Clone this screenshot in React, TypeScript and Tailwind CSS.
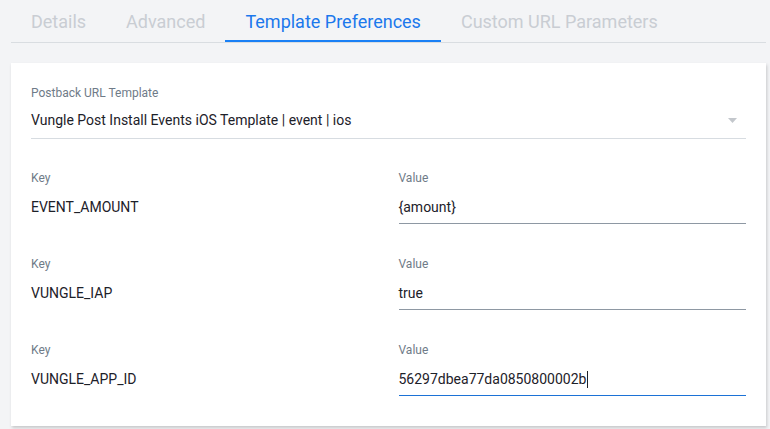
import React from 'react';

const tabs = ['Details', 'Advanced', 'Template Preferences', 'Custom URL Parameters'];

const rows = [
  { k: 'EVENT_AMOUNT', v: '{amount}' },
  { k: 'VUNGLE_IAP', v: 'true' },
  { k: 'VUNGLE_APP_ID', v: '56297dbea77da0850800002b', focused: true },
];

const Field: React.FC<{ label: string; value: string; line?: 'none' | 'gray' | 'blue'; caret?: boolean }> = ({
  label,
  value,
  line = 'none',
  caret = false,
}) => (
  <div>
    <div className="text-[12px] leading-4 text-[#6f7b88]">{label}</div>
    <div
      className={
        'mt-[3px] h-[35px] flex items-center pt-[2px] text-[14px] text-[#1d2129] ' +
        (line === 'gray' ? 'border-b border-[#8e98a3]' : line === 'blue' ? 'border-b border-[#1c72d6]' : '')
      }
    >
      {value}
      {caret && <span className="ml-px inline-block w-px h-[17px] bg-[#1d2129]" />}
    </div>
  </div>
);

export default function App() {
  return (
    <div className="min-h-screen w-[770px] h-[429px] overflow-hidden bg-[#f3f4f6] pl-[11px] pr-[4px] font-['Roboto',sans-serif]">
      <div className="flex border-b border-[#d9dde1]">
        {tabs.map((t, i) => (
          <div
            key={t}
            className={
              'h-[42px] px-5 pt-[2px] flex items-center text-[18px] border-b-2 ' +
              (i === 2 ? 'text-[#1b78ec] border-[#1a80f5]' : 'text-[#c9cdd3] border-transparent')
            }
          >
            {t}
          </div>
        ))}
      </div>

      <div className="mt-5 bg-white shadow-[1px_2px_3px_rgba(0,0,0,0.18)] px-5 pt-[22px] pb-[30px]">
        <div>
          <div className="text-[12px] leading-4 text-[#6f7b88]">Postback URL Template</div>
          <div className="mt-[3px] h-[35px] flex items-center justify-between pb-[2px] border-b border-[#d7dce1] text-[14px] text-[#1d2129]">
            <span>Vungle Post Install Events iOS Template | event | ios</span>
            <svg width="9" height="5" viewBox="0 0 9 5" className="mr-[9px]">
              <polygon points="0,0 9,0 4.5,5" fill="#c3c7cc" />
            </svg>
          </div>
        </div>

        {rows.map((r, i) => (
          <div key={r.k} className={'grid grid-cols-2 gap-x-5 ' + (i === 0 ? 'mt-[31px]' : 'mt-[32px]')}>
            <Field label="Key" value={r.k} />
            <Field label="Value" value={r.v} line={r.focused ? 'blue' : 'gray'} caret={r.focused} />
          </div>
        ))}
      </div>
    </div>
  );
}
